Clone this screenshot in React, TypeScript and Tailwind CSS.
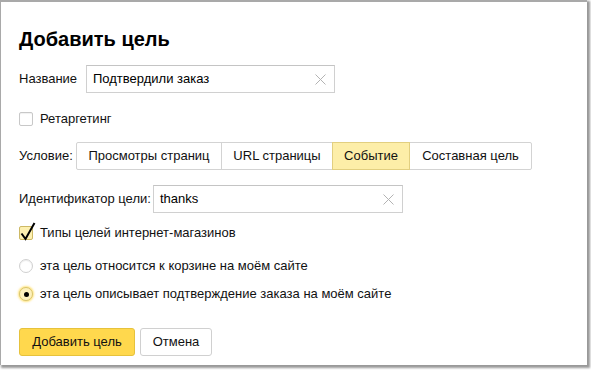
import React from "react";

const tabs = [
  { label: "Просмотры страниц", w: "w-[146px]" },
  { label: "URL страницы", w: "w-[112px]" },
  { label: "Событие", w: "w-[78px]", active: true },
  { label: "Составная цель", w: "w-[123px]" },
];

function ClearIcon() {
  return (
    <svg width="11" height="11" viewBox="0 0 11 11" className="shrink-0">
      <path d="M0.5 0.5 L10.5 10.5 M10.5 0.5 L0.5 10.5" stroke="#b3b3b3" strokeWidth="1" />
    </svg>
  );
}

function TextInput({ value, width }: { value: string; width: string }) {
  return (
    <div
      className={`${width} h-[28px] border border-[#d0d0d0] border-t-[#c4c4c4] flex items-center pl-[6px] pr-[8px] bg-white`}
    >
      <span className="flex-1 text-[13px] text-black">{value}</span>
      <ClearIcon />
    </div>
  );
}

export default function App() {
  return (
    <div className="w-[591px] h-[372px] bg-white overflow-hidden font-['Liberation_Sans',Arial,sans-serif] text-[13px] text-[#111]">
      <div className="w-[587px] h-[365px] bg-white border-t-2 border-l border-[#a9a9a9] shadow-[2px_2px_2px_1px_rgba(0,0,0,0.4)] pl-[18px] pt-[25px] flex flex-col">
        {/* Title */}
        <h1 className="text-[20px] leading-[24px] font-bold text-black">Добавить цель</h1>

        {/* Name */}
        <div className="mt-[14px] h-[28px] flex items-center">
          <span className="w-[67px]">Название</span>
          <TextInput value="Подтвердили заказ" width="w-[249px]" />
        </div>

        {/* Retargeting */}
        <div className="mt-[18px] h-[16px] flex items-center gap-[7px]">
          <span className="w-[14px] h-[14px] border border-[#c8c8c8] rounded-[2px] bg-white shadow-[inset_0_1px_1px_rgba(0,0,0,0.06)]" />
          <span>Ретаргетинг</span>
        </div>

        {/* Condition tabs */}
        <div className="mt-[15px] h-[28px] flex items-center">
          <span className="w-[57px]">Условие:</span>
          <div className="flex h-[28px]">
            {tabs.map((t, i) => (
              <div
                key={t.label}
                className={`${t.w} h-[28px] flex items-center justify-center border ${
                  i > 0 ? "-ml-px" : ""
                } ${
                  t.active
                    ? "relative z-10 bg-[#fdeea8] border-[#e2cf80]"
                    : "bg-white border-[#d3d3d3]"
                } ${i === 0 ? "rounded-l-[2px]" : ""} ${i === tabs.length - 1 ? "rounded-r-[2px]" : ""}`}
              >
                {t.label}
              </div>
            ))}
          </div>
        </div>

        {/* Goal id */}
        <div className="mt-[15px] h-[28px] flex items-center">
          <span className="w-[134px]">Идентификатор цели:</span>
          <TextInput value="thanks" width="w-[250px]" />
        </div>

        {/* Shop goal types */}
        <div className="mt-[12px] h-[16px] flex items-center gap-[7px]">
          <span className="relative w-[14px] h-[14px] border border-[#cdb965] rounded-[2px] bg-[#fdf0b0]">
            <svg
              width="20"
              height="22"
              viewBox="0 0 20 22"
              className="absolute left-[-2px] top-[-7px] overflow-visible"
            >
              <path d="M3.5 13.5 L7.5 19 L16.5 3" fill="none" stroke="#000" strokeWidth="2" />
            </svg>
          </span>
          <span>Типы целей интернет-магазинов</span>
        </div>

        {/* Radios */}
        <div className="mt-[17px] h-[16px] flex items-center gap-[7px]">
          <span className="w-[14px] h-[14px] rounded-full border border-[#d0d0d0] bg-white shadow-[inset_0_1px_1px_rgba(0,0,0,0.08)]" />
          <span>эта цель относится к корзине на моём сайте</span>
        </div>
        <div className="mt-[12px] h-[16px] flex items-center gap-[7px]">
          <span className="w-[14px] h-[14px] rounded-full border border-[#d8c46e] bg-[#fdf1bd] shadow-[0_0_2px_1px_rgba(255,204,0,0.5)] flex items-center justify-center">
            <span className="w-[5px] h-[5px] rounded-full bg-black" />
          </span>
          <span>эта цель описывает подтверждение заказа на моём сайте</span>
        </div>

        {/* Buttons */}
        <div className="mt-[26px] flex gap-[5px]">
          <button className="w-[116px] h-[28px] rounded-[3px] bg-[#ffd84d] border border-[#e6c23c] text-[#111] text-[13px]">
            Добавить цель
          </button>
          <button className="w-[72px] h-[28px] rounded-[3px] bg-white border border-[#d0d0d0] text-[#111] text-[13px]">
            Отмена
          </button>
        </div>
      </div>
    </div>
  );
}
